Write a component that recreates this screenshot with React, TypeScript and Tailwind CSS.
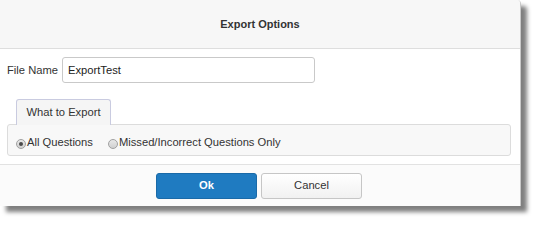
import React from 'react';

function Radio({ checked }: { checked?: boolean }) {
  return (
    <span className="relative mt-[5px] inline-block h-[10px] w-[10px] shrink-0 rounded-full border border-[#a0a0a0] bg-gradient-to-b from-[#e8e8e8] to-[#d0d0d0]">
      {checked && <span className="absolute left-[2px] top-[2px] h-[4px] w-[4px] rounded-full bg-[#4a4a4a]" />}
    </span>
  );
}

export default function App() {
  return (
    <div className="h-[221px] w-[536px] bg-white font-['Liberation_Sans',Arial,sans-serif] text-[11px] text-[#333]">
      <div className="flex h-[206px] w-[521px] flex-col overflow-hidden rounded-tr-[4px] border-r border-[#c8c8c8] bg-white shadow-[6px_6px_4px_rgba(0,0,0,0.5)]">
        <div className="flex h-[49px] shrink-0 items-center justify-center border-b border-[#dedede] bg-[#f7f7f7]">
          <span className="text-[11px] font-bold text-[#333]">Export Options</span>
        </div>
        <div className="flex-1 px-[7px] pt-[8px]">
          <div className="flex items-center gap-[4px]">
            <label className="text-[11.2px]">File Name</label>
            <div className="flex h-[26px] w-[253px] items-center rounded-[3px] border border-[#c9c9c9] bg-white px-[5px] text-[11.2px] text-[#222]">
              ExportTest
            </div>
          </div>
          <div className="mt-[16px] pl-[9px]">
            <div className="relative -mb-px inline-flex h-[26px] w-[95px] items-center justify-center rounded-t-[3px] border border-b-0 border-[#c9cbe0] bg-[#f5f5f5] text-[11.2px]">
              What to Export
            </div>
          </div>
          <div className="flex h-[32px] w-[504px] items-start rounded-[3px] border border-[#dcdcdc] bg-[#f8f8f8] pl-[8px] pt-[9px] text-[11.2px]">
            <label className="flex items-start gap-[1px]">
              <Radio checked />
              <span>All Questions</span>
            </label>
            <label className="ml-[15px] flex items-start gap-[1px]">
              <Radio />
              <span>Missed/Incorrect Questions Only</span>
            </label>
          </div>
        </div>
        <div className="flex h-[42px] shrink-0 items-center justify-center gap-[4px] border-t border-[#e2e2e2] bg-[#fbfbfb] pr-[2px]">
          <button className="h-[26px] w-[101px] rounded-[3px] border border-[#1a6aa8] bg-[#1f7bc1] text-[11.2px] font-bold text-white">
            Ok
          </button>
          <button className="h-[26px] w-[101px] rounded-[3px] border border-[#c6c6c6] bg-gradient-to-b from-white to-[#f1f1f1] text-[11.2px] text-[#333]">
            Cancel
          </button>
        </div>
      </div>
    </div>
  );
}
